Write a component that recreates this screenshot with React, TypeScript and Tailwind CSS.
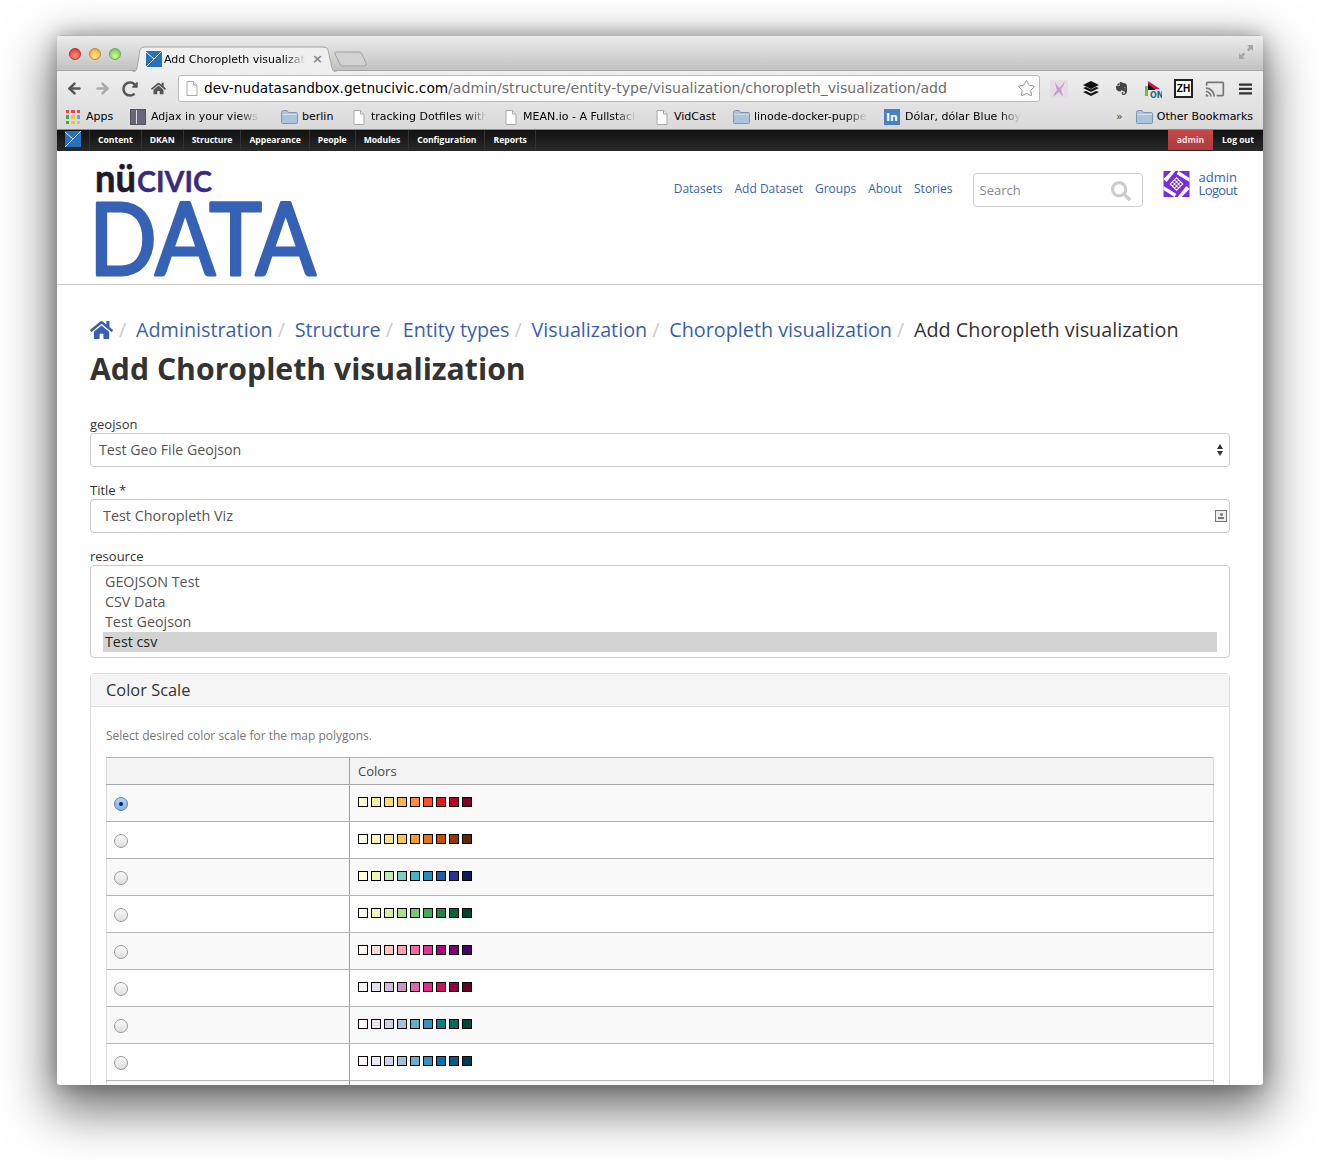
import type { ReactNode } from 'react'
import { Star, ArrowLeft, ArrowRight } from 'lucide-react'
import { FaHome, FaSearch, FaEvernote, FaRedoAlt } from 'react-icons/fa'
import { MdCast } from 'react-icons/md'

const SCALES = [
  ['#ffffcc', '#ffeda0', '#fed976', '#feb24c', '#fd8d3c', '#fc4e2a', '#e31a1c', '#bd0026', '#800026'],
  ['#ffffe5', '#fff7bc', '#fee391', '#fec44f', '#fe9929', '#ec7014', '#cc4c02', '#993404', '#662506'],
  ['#ffffd9', '#edf8b1', '#c7e9b4', '#7fcdbb', '#41b6c4', '#1d91c0', '#225ea8', '#253494', '#081d58'],
  ['#ffffe5', '#f7fcb9', '#d9f0a3', '#addd8e', '#78c679', '#41ab5d', '#238443', '#006837', '#004529'],
  ['#fff7f3', '#fde0dd', '#fcc5c0', '#fa9fb5', '#f768a1', '#dd3497', '#ae017e', '#7a0177', '#49006a'],
  ['#f7f4f9', '#e7e1ef', '#d4b9da', '#c994c7', '#df65b0', '#e7298a', '#ce1256', '#980043', '#67001f'],
  ['#fff7fb', '#ece2f0', '#d0d1e6', '#a6bddb', '#67a9cf', '#3690c0', '#02818a', '#016c59', '#014636'],
  ['#fff7fb', '#ece7f2', '#d0d1e6', '#a6bddb', '#74a9cf', '#3690c0', '#0570b0', '#045a8d', '#023858'],
  ['#f7fcfd', '#e0ecf4', '#bfd3e6', '#9ebcda', '#8c96c6', '#8c6bb1', '#88419d', '#810f7c', '#4d004b'],
]

const ADMIN_ITEMS = ['Content', 'DKAN', 'Structure', 'Appearance', 'People', 'Modules', 'Configuration', 'Reports']
const NAV_ITEMS = ['Datasets', 'Add Dataset', 'Groups', 'About', 'Stories']
const CRUMBS = ['Administration', 'Structure', 'Entity types', 'Visualization', 'Choropleth visualization']

function Favicon({ className }: { className: string }) {
  return (
    <svg viewBox="0 0 16 16" className={className}>
      <rect width="16" height="16" fill="#2a72b8" />
      <path d="M0 1 L8 8 L16 0 M0 16 L8 8" stroke="#dbe9f5" strokeWidth="1" fill="none" />
    </svg>
  )
}

function PageIcon() {
  return (
    <svg viewBox="0 0 12 15" className="h-[15px] w-3 shrink-0">
      <path d="M1 .5h6.500L11 4v10.500H1z" fill="#fff" stroke="#a8a8a8" />
      <path d="M7.500.5V4H11" fill="#eee" stroke="#a8a8a8" />
    </svg>
  )
}

function FolderIcon() {
  return (
    <svg viewBox="0 0 17 14" className="h-[14px] w-[17px] shrink-0">
      <path d="M.5 2.500q0-2 2-2h3.500l1.500 2h8q1 0 1 1v9q0 1-1 1h-14q-1 0-1-1z" fill="#a9c4dc" stroke="#7f96ab" />
      <path d="M1 4h15v1H1z" fill="#cfe0ee" />
    </svg>
  )
}

function Bookmark({ icon, label, width, fade }: { icon: ReactNode; label: string; width: string; fade?: boolean }) {
  return (
    <div className={`flex shrink-0 items-center ${width}`}>
      {icon}
      <span
        className={
          fade
            ? 'overflow-hidden whitespace-nowrap [mask-image:linear-gradient(to_right,black_82%,transparent)]'
            : 'whitespace-nowrap'
        }
      >
        {label}
      </span>
    </div>
  )
}

function AppsIcon() {
  const colors = ['#e44', '#e44', '#e44', '#4a4', '#fb3', '#4af', '#4a4', '#fb3', '#fb3']
  return (
    <div className="grid h-[14px] w-[14px] shrink-0 grid-cols-3 gap-[2px]">
      {colors.map((color, index) => (
        <span key={index} style={{ backgroundColor: color }} />
      ))}
    </div>
  )
}

function Identicon() {
  return (
    <svg viewBox="0 0 26 26" className="h-[26px] w-[27px] shrink-0">
      <rect width="26" height="26" fill="#7a2be2" />
      <path d="M0 8 L8 0 H12 L3 11 Z M26 18 L18 26 H14 L23 15 Z M15 0 L26 7 V11 L13 3 Z M0 15 L13 23 L11 26 L0 19 Z M13 6 L20 13 L13 20 L6 13 Z" fill="#fff" />
      <path d="M10 10h2v2h-2z M14 10h2v2h-2z M10 14h2v2h-2z M14 14h2v2h-2z M12 12h2v2h-2z M8 12h2v2H8z M16 12h2v2h-2z M12 8h2v2h-2z M12 16h2v2h-2z" fill="#7a2be2" />
    </svg>
  )
}

function Logo() {
  return (
    <svg viewBox="0 0 230 120" className="h-[120px] w-[230px] shrink-0">
      <text x="1" y="30" fontFamily="Lato, sans-serif" fontWeight="700" fontSize="39" fill="#1d1a2b" stroke="#1d1a2b" strokeWidth="0.6" textLength="41" lengthAdjust="spacingAndGlyphs">
        nü
      </text>
      <text x="43" y="30" fontFamily="Lato, sans-serif" fontWeight="700" fontSize="29" fill="#3a2a80" stroke="#3a2a80" strokeWidth="0.4" textLength="75" lengthAdjust="spacingAndGlyphs">
        CIVIC
      </text>
      <text
        x="-5"
        y="113"
        fontFamily="Lato, sans-serif"
        fontWeight="400"
        fontSize="100"
        fill="#3662b5"
        stroke="#3662b5"
        strokeWidth="3"
        strokeLinejoin="round"
        textLength="227"
        lengthAdjust="spacingAndGlyphs"
      >
        DATA
      </text>
    </svg>
  )
}

function BrowserChrome() {
  return (
    <div className="font-['DejaVu_Sans',sans-serif] text-black">
      <div className="relative h-[36px] border-t border-b border-t-[#b4b4b4] border-b-[#a6a6a6] bg-gradient-to-b from-[#ececec] to-[#c2c2c2]">
        <div className="absolute left-[12px] top-[12px] flex gap-[8px]">
          <span className="h-3 w-3 rounded-full border border-[#a33] bg-[radial-gradient(circle_at_50%_70%,#f98,#d22)]" />
          <span className="h-3 w-3 rounded-full border border-[#b83] bg-[radial-gradient(circle_at_50%_70%,#fe9,#e92)]" />
          <span className="h-3 w-3 rounded-full border border-[#6a5] bg-[radial-gradient(circle_at_50%_70%,#cf9,#6b4)]" />
        </div>
        <svg viewBox="0 0 206 26" className="absolute left-[75px] top-[10px] h-[26px] w-[206px]">
          <path d="M0 26H1Q4 26 5 22L8 4Q9 1 12 1H192Q195 1 196 4L200 22Q201 26 204 26H205" fill="#efefef" stroke="#a6a6a6" />
        </svg>
        <svg viewBox="0 0 34 16" className="absolute left-[277px] top-[15px] h-4 w-[34px]">
          <path d="M1 1h24q2 0 3 2l4 9q1 3-2 3H9q-2 0-3-2L1 3q-1-2 0-2z" fill="#d2d2d2" stroke="#a0a0a0" />
        </svg>
        <Favicon className="absolute left-[89px] top-[15px] h-4 w-4" />
        <span className="absolute left-[107px] top-[17px] w-[142px] overflow-hidden whitespace-nowrap text-[11px] leading-[14px] [mask-image:linear-gradient(to_right,black_85%,transparent)]">
          Add Choropleth visualization
        </span>
        <span className="absolute left-[255px] top-[15px] text-[13px] font-bold leading-4 text-[#888]">×</span>
        <svg viewBox="0 0 16 16" className="absolute right-[9px] top-[8px] h-4 w-4 text-[#a8a8a8]">
          <path d="M9 1h6v6l-2-2-2.500 2.500-1.500-1.500L11 3zM7 15H1V9l2 2 2.500-2.500L7 10 5 13z" fill="currentColor" />
        </svg>
      </div>
      <div className="bg-gradient-to-b from-[#efefef] to-[#d9d9d9]">
        <div className="flex h-[32px] items-center pl-[9px] pt-[3px]">
          <ArrowLeft className="h-[17px] w-[17px] shrink-0 text-[#555]" strokeWidth={3.5} />
          <ArrowRight className="ml-[11px] h-[17px] w-[17px] shrink-0 text-[#aaa]" strokeWidth={3.5} />
          <FaRedoAlt className="ml-[11px] h-4 w-4 shrink-0 text-[#555]" />
          <FaHome className="ml-[13px] h-[15px] w-[15px] shrink-0 text-[#555]" />
          <div className="ml-[12px] flex h-[27px] w-[862px] shrink-0 items-center rounded-[3px] border border-[#bbb] bg-white pl-[7px] pr-[3px]">
            <PageIcon />
            <span className="ml-[6px] whitespace-nowrap text-[13.7px]">
              dev-nudatasandbox.getnucivic.com
              <span className="text-[14.1px] text-[#6e6e6e]">/admin/structure/entity-type/visualization/choropleth_visualization/add</span>
            </span>
            <Star className="ml-auto h-[19px] w-[19px] shrink-0 text-[#777]" strokeWidth={1} />
          </div>
          <svg viewBox="0 0 18 18" className="ml-[10px] h-[18px] w-[18px] shrink-0">
            <rect width="18" height="18" fill="#e4dde4" />
            <path d="M15 1Q12 6 9 8Q7 5 5 2Q6 7 7 10Q4 13 3 17Q7 14 9 12Q11 15 13 16Q12 12 11 9Q14 6 15 1Z" fill="#c79ad2" />
          </svg>
          <svg viewBox="0 0 18 18" className="ml-[14px] h-[18px] w-[18px] shrink-0">
            <path d="M9 1l8 4-8 4-8-4zM1 8l3-1 5 2.500L14 7l3 1-8 4zM1 12l3-1 5 2.500 5-2.500 3 1-8 4z" fill="#111" />
          </svg>
          <FaEvernote className="ml-[15px] h-[15px] w-[13px] shrink-0 text-[#444]" />
          <svg viewBox="0 0 18 18" className="ml-[16px] h-[18px] w-[18px] shrink-0">
            <path d="M4 1l12 8H4z" fill="#e0104a" />
            <path d="M4 4l8 6H4z" fill="#111" />
            <rect x="1" y="6" width="3" height="10" fill="#7ab648" />
            <text x="6" y="18" fontSize="8" fontWeight="700" fill="#267">ON</text>
          </svg>
          <div className="ml-[12px] flex h-[19px] w-[19px] shrink-0 items-center justify-center border-2 border-[#222] bg-white font-['Liberation_Sans',sans-serif] text-[10px] font-bold leading-none">
            ZH
          </div>
          <MdCast className="ml-[12px] h-5 w-5 shrink-0 text-[#777]" />
          <svg viewBox="0 0 14 14" className="ml-[14px] h-[14px] w-[13px] shrink-0">
            <path d="M0 1h14v2.500H0zM0 5.700h14v2.500H0zM0 10.500h14V13H0z" fill="#333" />
          </svg>
        </div>
        <div className="flex h-[27px] items-center border-b border-[#8c8c8c] pl-[9px] pr-[10px] pt-[2px] text-[11px]">
          <Bookmark icon={<AppsIcon />} label="Apps" width="w-[64px] gap-[6px]" />
          <Bookmark
            icon={<div className="h-[16px] w-[16px] shrink-0 border border-[#555] bg-[linear-gradient(to_right,#667_35%,#ddd_35%,#ddd_45%,#667_45%)]" />}
            label="Adjax in your views - The"
            width="w-[151px] gap-[5px] pr-[22px]"
            fade
          />
          <Bookmark icon={<FolderIcon />} label="berlin" width="w-[72px] gap-[4px]" />
          <Bookmark icon={<PageIcon />} label="tracking Dotfiles with Git" width="w-[152px] gap-[6px] pr-[18px]" fade />
          <Bookmark icon={<PageIcon />} label="MEAN.io - A Fullstack JS" width="w-[151px] gap-[6px] pr-[20px]" fade />
          <Bookmark icon={<PageIcon />} label="VidCast" width="w-[77px] gap-[6px]" />
          <Bookmark icon={<FolderIcon />} label="linode-docker-puppet" width="w-[151px] gap-[4px] pr-[17px]" fade />
          <Bookmark
            icon={<div className="flex h-4 w-4 shrink-0 items-center justify-center bg-[#4a7fc1] text-[11px] font-bold leading-none text-white">In</div>}
            label="Dólar, dólar Blue hoy, cotización"
            width="w-[137px] gap-[5px]"
            fade
          />
          <span className="ml-auto text-[#444]">»</span>
          <div className="ml-[13px] flex items-center gap-[4px]">
            <FolderIcon />
            <span className="whitespace-nowrap">Other Bookmarks</span>
          </div>
        </div>
      </div>
    </div>
  )
}

function AdminBar() {
  return (
    <div className="flex h-[21px] items-start bg-gradient-to-b from-[#111] to-[#2a2a2a] font-['Open_Sans',sans-serif] text-[8.6px] font-bold leading-[20px] text-white">
      <div className="flex h-[21px] w-[33px] items-start border-r border-[#333] pl-[8px] pt-[1px]">
        <Favicon className="h-4 w-4" />
      </div>
      {ADMIN_ITEMS.map((item) => (
        <div key={item} className="border-r border-[#333] px-[8px]">
          {item}
        </div>
      ))}
      <div className="ml-auto h-[20px] w-[45px] bg-gradient-to-b from-[#c5484a] to-[#b03a3c] text-center text-[#f4dede]">admin</div>
      <div className="w-[50px] pl-[9px]">Log out</div>
    </div>
  )
}

function SiteHeader() {
  return (
    <header className="flex h-[134px] border-b border-[#ccc] pl-[37px] pr-[26px] pt-[11px]">
      <Logo />
      <nav className="ml-auto mt-[18px] flex h-[18px] gap-[12px] text-[12px] leading-[18px] text-[#3a62ad]">
        {NAV_ITEMS.map((item) => (
          <span key={item}>{item}</span>
        ))}
      </nav>
      <div className="ml-[20px] mt-[11px] flex h-[34px] w-[170px] items-center justify-between rounded-[4px] border border-[#ccc] pl-[6px] pr-[11px] pt-[1px] text-[13px] text-[#888]">
        Search
        <FaSearch className="h-[20px] w-[20px] text-[#ccc]" />
      </div>
      <div className="ml-[20px] mt-[9px] flex gap-[9px]">
        <Identicon />
        <div className="text-[13px] leading-[13px] text-[#3a62ad]">
          <div>admin</div>
          <div className="tracking-[-0.6px]">Logout</div>
        </div>
      </div>
    </header>
  )
}

function ColorRow({ colors, checked, striped }: { colors: string[]; checked?: boolean; striped: boolean }) {
  return (
    <tr className={striped ? 'bg-[#f9f9f9]' : 'bg-white'}>
      <td className="h-[37px] w-[243px] border-r border-b border-r-[#a0a0a0] border-b-[#b4b4b4] pl-[7px]">
        <span
          className={
            checked
              ? 'mt-[2px] flex h-[14px] w-[14px] items-center justify-center rounded-full border border-[#6b7fa6] bg-gradient-to-b from-[#b4d4f7] to-[#7db2ee]'
              : 'mt-[2px] block h-[14px] w-[14px] rounded-full border border-[#9a9a9a] bg-gradient-to-b from-[#fafafa] to-[#dedede]'
          }
        >
          {checked ? <span className="h-[4px] w-[4px] rounded-full bg-[#102040]" /> : null}
        </span>
      </td>
      <td className="border-b border-[#b4b4b4] pb-[2px] pl-[8px]">
        <div className="flex gap-[3px]">
          {colors.map((color) => (
            <span key={color} className="h-[10px] w-[10px] border border-black" style={{ backgroundColor: color }} />
          ))}
        </div>
      </td>
    </tr>
  )
}

function EntityForm() {
  return (
    <form className="pt-[25px] text-[13px] text-[#333]">
      <label className="block h-[18px] leading-[18px]">geojson</label>
      <div className="relative">
        <select className="block h-[34px] w-full appearance-none rounded-[4px] border border-[#ccc] bg-white px-[8px] text-[14.2px] text-[#555]">
          <option>Test Geo File Geojson</option>
        </select>
        <svg viewBox="0 0 8 12" className="absolute right-[6px] top-[11px] h-3 w-2">
          <path d="M4 0l3 5H1zM4 12L1 7h6z" fill="#333" />
        </svg>
      </div>
      <label className="mt-[14px] block h-[18px] leading-[18px]">Title *</label>
      <div className="relative">
        <input
          readOnly
          value="Test Choropleth Viz"
          className="block h-[34px] w-full rounded-[4px] border border-[#ccc] bg-white px-[12px] pb-[2px] text-[14.4px] text-[#555]"
        />
        <span className="absolute right-[3px] top-[11px] flex h-3 w-3 flex-col items-center justify-center gap-px border border-[#777] bg-[#eee]">
          <span className="h-[3px] w-[3px] rounded-full bg-[#777]" />
          <span className="h-[2px] w-[6px] bg-[#777]" />
        </span>
      </div>
      <label className="mt-[14px] block h-[18px] leading-[18px]">resource</label>
      <div className="h-[93px] rounded-[4px] border border-[#ccc] px-[12px] pt-[6px] text-[14.3px] leading-[20px] text-[#555]">
        <div className="pl-[2px]">GEOJSON Test</div>
        <div className="pl-[2px]">CSV Data</div>
        <div className="pl-[2px]">Test Geojson</div>
        <div className="bg-[#d3d3d3] pl-[2px] text-[#222]">Test csv</div>
      </div>
      <section className="mt-[15px] rounded-t-[4px] border border-[#ddd]">
        <h2 className="h-[33px] border-b border-[#ddd] bg-[#f5f5f5] pl-[15px] text-[16.4px] leading-[32px] text-[#333]">Color Scale</h2>
        <div className="px-[15px] pt-[21px]">
          <p className="h-[29px] text-[12px] leading-[16px] text-[#777]">Select desired color scale for the map polygons.</p>
          <table className="w-full border-collapse border-x border-t border-x-[#ddd] border-t-[#b4b4b4]">
            <thead>
              <tr className="bg-[#f3f3f3]">
                <th className="h-[27px] w-[243px] border-r border-b border-r-[#a0a0a0] border-b-[#a8a8a8]" />
                <th className="border-b border-b-[#a8a8a8] pl-[8px] pt-[1px] text-left text-[13px] font-normal text-[#444]">Colors</th>
              </tr>
            </thead>
            <tbody>
              {SCALES.map((colors, index) => (
                <ColorRow key={colors[8]} colors={colors} checked={index === 0} striped={index % 2 === 0} />
              ))}
            </tbody>
          </table>
        </div>
      </section>
    </form>
  )
}

export default function App() {
  return (
    <div className="h-[1164px] overflow-hidden bg-white pl-[57px] pt-[35px]">
      <div className="h-[1050px] w-[1206px] overflow-hidden rounded-t-[5px] rounded-b-[3px] bg-white font-['Open_Sans',sans-serif] shadow-[0_20px_50px_6px_rgba(0,0,0,0.55),0_0_20px_rgba(0,0,0,0.3)]">
        <BrowserChrome />
        <AdminBar />
        <SiteHeader />
        <main className="px-[33px] pt-[30px]">
          <nav className="flex h-[29px] items-center text-[19.8px] leading-[29px] text-[#3a5fb0]">
            <FaHome className="mr-px h-[22px] w-[23px] shrink-0" />
            {CRUMBS.map((crumb) => (
              <span key={crumb} className="flex whitespace-nowrap">
                <span className="w-[22px] pl-[5px] text-[#ccc]">/</span>
                {crumb}
              </span>
            ))}
            <span className="flex whitespace-nowrap text-[#333]">
              <span className="w-[22px] pl-[5px] text-[#ccc]">/</span>
              Add Choropleth visualization
            </span>
          </nav>
          <h1 className="mt-[4px] h-[42px] text-[30.2px] font-bold leading-[42px] text-[#333]">Add Choropleth visualization</h1>
          <EntityForm />
        </main>
      </div>
    </div>
  )
}
